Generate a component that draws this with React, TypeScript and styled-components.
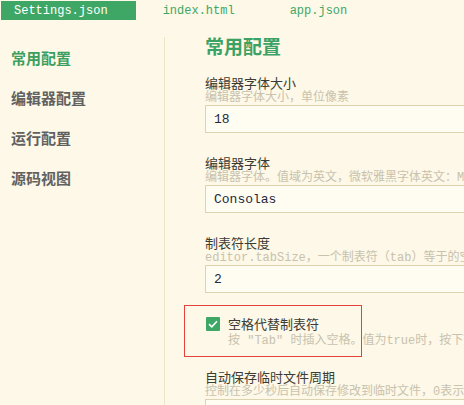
import styled, { createGlobalStyle } from 'styled-components';

const GlobalStyle = createGlobalStyle`
  html, body {
    margin: 0;
    padding: 0;
    background: #fdf8e7;
    overflow: hidden;
  }
  body {
    font-family: "Noto Sans CJK SC", "Noto Sans", sans-serif;
  }
`;

const MONO = `"Liberation Mono", "Noto Sans CJK SC", monospace`;

type Field = {
  label: string;
  desc: string;
  value: string;
};

const fields: Field[] = [
  { label: '编辑器字体大小', desc: '编辑器字体大小，单位像素', value: '18' },
  {
    label: '编辑器字体',
    desc: '编辑器字体。值域为英文，微软雅黑字体英文：Microsoft YaHei',
    value: 'Consolas',
  },
  {
    label: '制表符长度',
    desc: 'editor.tabSize，一个制表符（tab）等于的空格数',
    value: '2',
  },
];

const menu = ['常用配置', '编辑器配置', '运行配置', '源码视图'];
const tabs = ['Settings.json', 'index.html', 'app.json'];

const App: React.FC = () => {
  return (
    <>
      <GlobalStyle />
      <Page>
        <TabBar>
          {tabs.map((t, i) => (
            <Tab key={t} $active={i === 0}>
              {t}
            </Tab>
          ))}
        </TabBar>
        <Body>
          <Sidebar>
            {menu.map((m, i) => (
              <MenuItem key={m} $active={i === 0}>
                {m}
              </MenuItem>
            ))}
          </Sidebar>
          <Content>
            <Title>常用配置</Title>
            {fields.map((f) => (
              <FieldBlock key={f.label}>
                <Label>{f.label}</Label>
                <Desc>{f.desc}</Desc>
                <Input defaultValue={f.value} />
              </FieldBlock>
            ))}
            <Highlight>
              <CheckRow>
                <CheckBox>
                  <svg width="10" height="8" viewBox="0 0 10 8">
                    <path d="M1 4.2 L3.8 6.8 L9 1.2" fill="none" stroke="#fff" strokeWidth="1.6" />
                  </svg>
                </CheckBox>
                <CheckText>
                  <CheckLabel>空格代替制表符</CheckLabel>
                  <Desc>按 "Tab" 时插入空格。值为true时，按下Tab键插入空格</Desc>
                </CheckText>
              </CheckRow>
            </Highlight>
            <FieldBlock>
              <Label>自动保存临时文件周期</Label>
              <Desc>控制在多少秒后自动保存修改到临时文件，0表示不自动保存</Desc>
              <Input defaultValue="30" />
            </FieldBlock>
          </Content>
        </Body>
      </Page>
    </>
  );
};

export default App;

// Styled components

const Page = styled.div`
  width: 464px;
  height: 405px;
  overflow: hidden;
  background: #fdf8e7;
  display: flex;
  flex-direction: column;
`;

const TabBar = styled.div`
  display: flex;
  gap: 14px;
  padding: 1px 0 0 1px;
  height: 20px;
  flex-shrink: 0;
`;

const Tab = styled.div<{ $active: boolean }>`
  height: 19px;
  display: flex;
  align-items: center;
  padding: 0 28px 0 13px;
  font-family: ${MONO};
  font-size: 12px;
  white-space: nowrap;
  color: ${({ $active }) => ($active ? '#ffffff' : '#3fa766')};
  background: ${({ $active }) => ($active ? '#3fa766' : 'transparent')};
`;

const Body = styled.div`
  display: flex;
  flex: 1;
  min-height: 0;
`;

const Sidebar = styled.div`
  width: 164px;
  flex-shrink: 0;
  margin-top: 16px;
  border-right: 1px solid #eee5c9;
  display: flex;
  flex-direction: column;
`;

const MenuItem = styled.div<{ $active: boolean }>`
  height: 40px;
  display: flex;
  align-items: center;
  padding-left: 11px;
  font-size: 15px;
  font-weight: 700;
  color: ${({ $active }) => ($active ? '#3c9f5f' : '#616161')};
`;

const Content = styled.div`
  flex: 1;
  padding: 14px 0 0 40px;
  min-width: 0;
`;

const Title = styled.div`
  font-size: 19px;
  line-height: 22px;
  font-weight: 700;
  color: #3ca264;
  margin-bottom: 18px;
`;

const FieldBlock = styled.div`
  display: flex;
  flex-direction: column;
  margin-bottom: 22px;
`;

const Label = styled.div`
  font-size: 13px;
  line-height: 16px;
  color: #3b3a33;
  white-space: nowrap;
`;

const Desc = styled.div`
  font-family: ${MONO};
  font-size: 12px;
  line-height: 14px;
  color: #c8c2ae;
  white-space: nowrap;
`;

const Input = styled.input`
  box-sizing: border-box;
  width: 400px;
  height: 28px;
  border: 1px solid #dcd4b0;
  background: #fffcf2;
  padding: 0 8px;
  font-family: ${MONO};
  font-size: 13px;
  color: #1e2a3a;
  outline: none;
`;

const Highlight = styled.div`
  box-sizing: border-box;
  width: 178px;
  height: 52px;
  margin: -10px 0 12px -21px;
  border: 1px solid #e8403b;
  padding: 9px 0 0 21px;
`;

const CheckRow = styled.div`
  display: flex;
  gap: 8px;
  align-items: flex-start;
`;

const CheckBox = styled.div`
  width: 14px;
  height: 14px;
  margin-top: 2px;
  flex-shrink: 0;
  background: #3fa766;
  border-radius: 1px;
  display: flex;
  align-items: center;
  justify-content: center;
`;

const CheckText = styled.div`
  display: flex;
  flex-direction: column;
  padding-top: 1px;
`;

const CheckLabel = styled.div`
  font-size: 13px;
  line-height: 16px;
  color: #3b3a33;
  white-space: nowrap;
  margin-bottom: 2px;
`;
